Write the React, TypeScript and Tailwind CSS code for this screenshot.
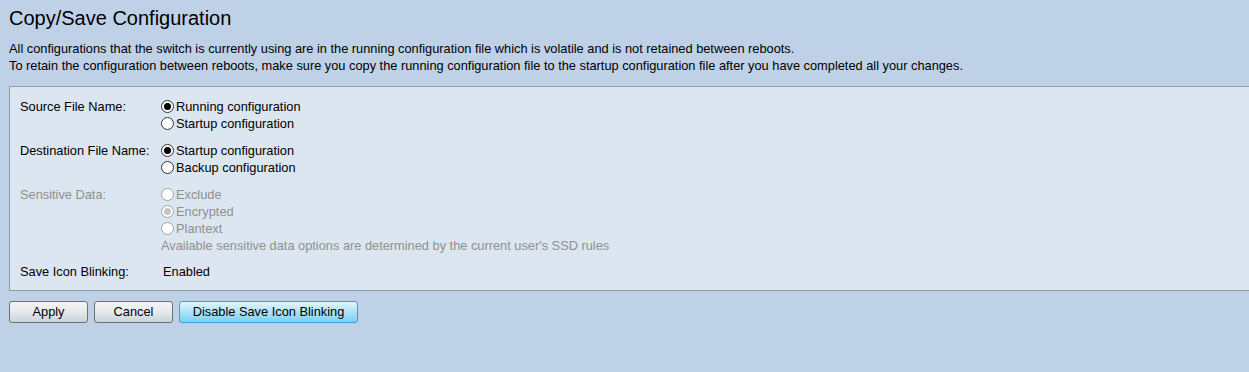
import type { ReactNode } from 'react';

type RadioProps = {
  checked?: boolean;
  disabled?: boolean;
  children: ReactNode;
};

function Radio({ checked, disabled, children }: RadioProps) {
  return (
    <div className="flex h-[17px] items-center">
      <span
        className={`mr-[2px] flex h-[13px] w-[13px] items-center justify-center rounded-full border bg-white ${
          disabled ? 'border-[#a3a3a3]' : 'border-[#333333]'
        }`}
      >
        {checked && (
          <span
            className={`h-[7px] w-[7px] rounded-full ${disabled ? 'bg-[#c4c4c4]' : 'bg-black'}`}
          />
        )}
      </span>
      <span className={disabled ? 'text-[#8f8f8f]' : 'text-black'}>{children}</span>
    </div>
  );
}

type RowProps = {
  label: string;
  disabled?: boolean;
  className?: string;
  children: ReactNode;
};

function Row({ label, disabled, className = '', children }: RowProps) {
  return (
    <div className={`flex ${className}`}>
      <div className={`h-[17px] w-[141px] shrink-0 leading-[17px] ${disabled ? 'text-[#8f8f8f]' : 'text-black'}`}>
        {label}
      </div>
      <div className="flex flex-col">{children}</div>
    </div>
  );
}

const buttonBase =
  'h-[22px] rounded-[3px] border pt-px text-[12.8px] leading-none text-black';

export default function App() {
  return (
    <div className="min-h-[372px] bg-[#bfd1e6] text-[12.8px] leading-[17px] text-black [font-family:'Liberation_Sans',Arial,sans-serif]">
      <div className="pl-[9px] pt-[6px]">
        <h1 className="text-[20px] leading-[24px]">Copy/Save Configuration</h1>
        <p className="mt-[10px]">
          All configurations that the switch is currently using are in the running configuration file which is volatile and is not retained between reboots.
          <br />
          To retain the configuration between reboots, make sure you copy the running configuration file to the startup configuration file after you have completed all your changes.
        </p>
      </div>

      <div className="ml-[9px] mt-[12px] flex flex-col gap-[10px] border-y border-l border-[#8a9ea9] bg-[#dce6f0] pb-[10px] pl-[10px] pt-[11px]">
        <Row label="Source File Name:">
          <Radio checked>Running configuration</Radio>
          <Radio>Startup configuration</Radio>
        </Row>
        <Row label="Destination File Name:">
          <Radio checked>Startup configuration</Radio>
          <Radio>Backup configuration</Radio>
        </Row>
        <Row label="Sensitive Data:" disabled>
          <Radio disabled>Exclude</Radio>
          <Radio disabled checked>Encrypted</Radio>
          <Radio disabled>Plantext</Radio>
          <div className="h-[17px] text-[#8f8f8f]">
            Available sensitive data options are determined by the current user's SSD rules
          </div>
        </Row>
        <Row label="Save Icon Blinking:" className="-mt-px">
          <div className="h-[17px] pl-[2px]">Enabled</div>
        </Row>
      </div>

      <div className="ml-[9px] mt-[10px] flex gap-[6px]">
        <button
          type="button"
          className={`${buttonBase} w-[79px] border-[#707070] bg-gradient-to-b from-[#f4f4f4] via-[#e6e9ec] to-[#c9d3da]`}
        >
          Apply
        </button>
        <button
          type="button"
          className={`${buttonBase} w-[79px] border-[#707070] bg-gradient-to-b from-[#f4f4f4] via-[#e6e9ec] to-[#c9d3da]`}
        >
          Cancel
        </button>
        <button
          type="button"
          className={`${buttonBase} w-[179px] border-[#3c9fd6] bg-gradient-to-b from-[#e3f5fd] via-[#ade2f8] to-[#78d0f3]`}
        >
          Disable Save Icon Blinking
        </button>
      </div>
    </div>
  );
}
